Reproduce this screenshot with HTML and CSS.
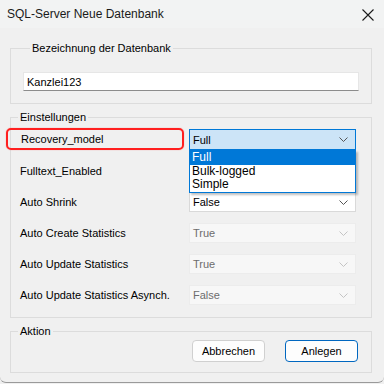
FILE: index.html
```html
<!DOCTYPE html>
<html lang="de">
<head>
<meta charset="utf-8">
<title>SQL-Server Neue Datenbank</title>
<link rel="stylesheet" href="styles.css">
</head>
<body>
<div class="window">
  <div class="titlebar">
    <span class="title">SQL-Server Neue Datenbank</span>
    <svg class="close" width="12" height="12" viewBox="0 0 12 12"><path d="M0.5 0.5L11.5 11.5M11.5 0.5L0.5 11.5" stroke="#1a1a1a" stroke-width="1.1" fill="none"/></svg>
  </div>
  <div class="client">
    <fieldset class="group g1">
      <legend>Bezeichnung der Datenbank</legend>
      <div class="textbox">Kanzlei123</div>
    </fieldset>
    <fieldset class="group g2">
      <legend>Einstellungen</legend>
      <div class="row">
        <div class="label highlight">Recovery_model</div>
        <div class="combo focused">
          <span>Full</span>
          <svg class="chev" width="9" height="5" viewBox="0 0 9 5"><path d="M0.5 0.5L4.5 4.5L8.5 0.5" stroke="#555" fill="none"/></svg>
          <div class="dropdown">
            <div class="opt sel">Full</div>
            <div class="opt">Bulk-logged</div>
            <div class="opt">Simple</div>
          </div>
        </div>
      </div>
      <div class="row">
        <div class="label">Fulltext_Enabled</div>
        <div class="combo"></div>
      </div>
      <div class="row">
        <div class="label">Auto Shrink</div>
        <div class="combo"><span>False</span><svg class="chev" width="9" height="5" viewBox="0 0 9 5"><path d="M0.5 0.5L4.5 4.5L8.5 0.5" stroke="#555" fill="none"/></svg></div>
      </div>
      <div class="row">
        <div class="label">Auto Create Statistics</div>
        <div class="combo disabled"><span>True</span><svg class="chev" width="9" height="5" viewBox="0 0 9 5"><path d="M0.5 0.5L4.5 4.5L8.5 0.5" stroke="#c4c4c4" fill="none"/></svg></div>
      </div>
      <div class="row">
        <div class="label">Auto Update Statistics</div>
        <div class="combo disabled"><span>True</span><svg class="chev" width="9" height="5" viewBox="0 0 9 5"><path d="M0.5 0.5L4.5 4.5L8.5 0.5" stroke="#c4c4c4" fill="none"/></svg></div>
      </div>
      <div class="row">
        <div class="label">Auto Update Statistics Asynch.</div>
        <div class="combo disabled"><span>False</span><svg class="chev" width="9" height="5" viewBox="0 0 9 5"><path d="M0.5 0.5L4.5 4.5L8.5 0.5" stroke="#c4c4c4" fill="none"/></svg></div>
      </div>
    </fieldset>
    <fieldset class="group g3">
      <legend>Aktion</legend>
      <div class="buttons">
        <button class="btn">Abbrechen</button>
        <button class="btn default">Anlegen</button>
      </div>
    </fieldset>
  </div>
</div>
</body>
</html>
```

FILE: styles.css
```css
html, body {
  margin: 0;
  padding: 0;
  width: 384px;
  height: 384px;
  overflow: hidden;
  background: #f0f0f0;
}
body {
  font-family: "Liberation Sans", Arial, sans-serif;
  font-size: 11px;
  color: #000;
}
.window {
  width: 384px;
  height: 383px;
  border-bottom: 1px solid #9a9a9a;
  border-radius: 0 0 6px 6px;
  box-sizing: border-box;
  background: #f0f0f0;
  display: flex;
  flex-direction: column;
}
.titlebar {
  height: 28px;
  flex: none;
  background: #f2f3f3;
  display: flex;
  align-items: center;
  justify-content: space-between;
  padding: 0 10px 0 7px;
}
.title {
  font-size: 12px;
  color: #1a1a1a;
}
.close {
  display: block;
  margin-top: 1px;
}
.client {
  padding: 13px 12px 0 10px;
  display: flex;
  flex-direction: column;
  gap: 6px;
}
.group {
  margin: 0;
  border: 1px solid #dcdcdc;
  min-width: 0;
}
.group legend {
  margin-left: 7px;
  padding: 0 2px;
  line-height: 14px;
  font-size: 11px;
}
.g1 {
  padding: 17px 12px 12px 12px;
}
.textbox {
  height: 19px;
  box-sizing: border-box;
  background: #fff;
  border: 1px solid #e6e6e6;
  border-bottom-color: #8c8c8c;
  padding: 2px 0 0 3px;
  line-height: 14px;
  color: #000;
}
.g2 {
  padding: 6px 15px 12px 0;
  display: flex;
  flex-direction: column;
  gap: 11px;
}
.row {
  height: 20px;
  display: flex;
  align-items: center;
  justify-content: space-between;
}
.label {
  height: 20px;
  line-height: 20px;
  padding-left: 9px;
  width: 168px;
  box-sizing: border-box;
}
.label.highlight {
  margin-left: -5px;
  padding-left: 13px;
  width: 178px;
  height: 22px;
  margin-top: -2px;
  border: 2px solid #ff1f1f;
  border-radius: 5px;
  line-height: 18px;
  box-shadow: 0 0 1px rgba(255,31,31,0.6);
}
.combo {
  position: relative;
  width: 167px;
  height: 20px;
  box-sizing: border-box;
  background: #fff;
  border: 1px solid #d9d9d9;
  display: flex;
  align-items: center;
  justify-content: space-between;
  padding: 0 7px 0 3px;
}
.combo.focused {
  background: #cce4f7;
  border-color: #0078d7;
  height: 21px;
  margin-top: -1px;
}
.combo.disabled {
  background: #f7f7f7;
  border-color: #ececec;
  color: #6d6d6d;
}
.chev {
  display: block;
}
.dropdown {
  position: absolute;
  left: -1px;
  top: 20px;
  width: 167px;
  box-sizing: border-box;
  background: #fff;
  border: 1px solid #0078d7;
  box-shadow: 2px 2px 2px rgba(0,0,0,0.25);
  z-index: 2;
}
.opt {
  height: 13.5px;
  line-height: 13px;
  padding-left: 2px;
  font-size: 12px;
}
.opt.sel {
  background: #0078d7;
  color: #fff;
}
.g3 {
  padding: 2px 13px 10px 0;
}
.buttons {
  display: flex;
  justify-content: flex-end;
  gap: 20px;
}
.btn {
  width: 73px;
  height: 22px;
  box-sizing: border-box;
  background: #fdfdfd;
  border: 1px solid #d0d0d0;
  border-radius: 4px;
  font-family: "Liberation Sans", Arial, sans-serif;
  font-size: 11px;
  color: #000;
  padding: 0;
}
.btn.default {
  border: 1px solid #0067c0;
}
```
